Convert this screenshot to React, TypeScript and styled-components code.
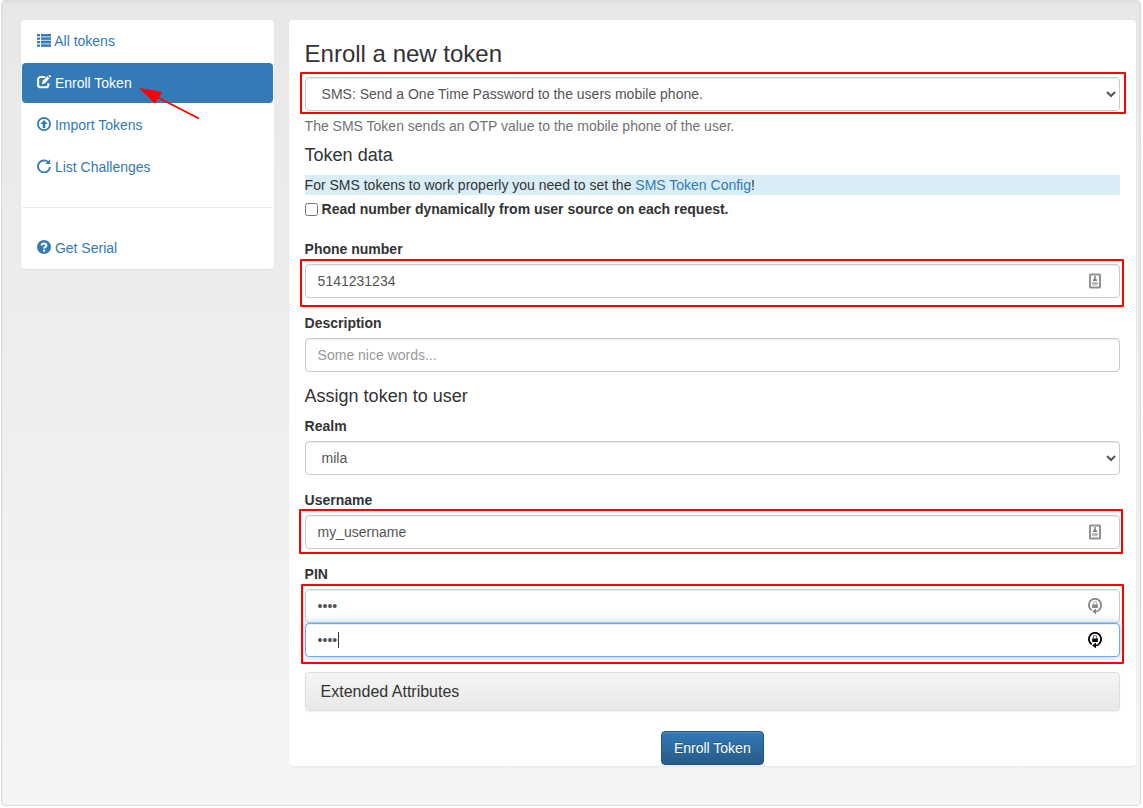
import React from 'react';
import styled, { createGlobalStyle, css } from 'styled-components';

const GlobalStyle = createGlobalStyle`
  *, *::before, *::after { box-sizing: border-box; }
  body {
    margin: 0;
    background: #fff;
    color: #333;
    font: 14px/20px "Liberation Sans", Arial, sans-serif;
    overflow: hidden;
  }
  input, select, button { font-family: inherit; }
`;

const Page = styled.div`
  position: relative;
  width: 1143px;
  height: 808px;
  padding: 0 2px 2px 1px;
`;

const Well = styled.div`
  display: flex;
  align-items: flex-start;
  gap: 14.6px;
  height: 806px;
  padding: 19px 4px 19px 19px;
  border: 1px solid #dcdcdc;
  border-radius: 4px;
  background: linear-gradient(to bottom, #e8e8e8 0%, #f5f5f5 100%);
  box-shadow: inset 0 1px 3px rgba(0, 0, 0, 0.05), 0 1px 0 rgba(255, 255, 255, 0.1);
`;

const panel = css`
  background: #fff;
  border: 1px solid transparent;
  border-radius: 4px;
  box-shadow: 0 1px 2px rgba(0, 0, 0, 0.05);
`;

const Sidebar = styled.nav`
  ${panel}
  flex: none;
  width: 253px;
  height: 249px;
  display: flex;
  flex-direction: column;
  gap: 2px;
`;

const NavItem = styled.a<{ $active?: boolean; $gap?: number }>`
  display: flex;
  align-items: center;
  gap: ${p => p.$gap ?? 3.9}px;
  height: 40px;
  padding: 0 15px;
  border-radius: 4px;
  color: ${p => (p.$active ? '#fff' : '#337ab7')};
  background: ${p => (p.$active ? '#337ab7' : 'transparent')};
`;

const Divider = styled.div`
  height: 1px;
  margin: 18px 0;
  background: #eee;
`;

const Icon = styled.svg`
  width: 14px;
  height: 14px;
  flex: none;
  margin-top: -2px;
`;

const Main = styled.main`
  ${panel}
  flex: none;
  width: 847.4px;
  height: 746px;
  padding: 20px 15px 0;
`;

const Title = styled.h3`
  margin: 0 0 10px;
  font-size: 24px;
  line-height: 26px;
  font-weight: 400;
`;

const Subtitle = styled.h4`
  margin: 0;
  padding: 9px 0 10px;
  font-size: 18px;
  line-height: 20px;
  font-weight: 400;
`;

const Help = styled.p`
  margin: 5px 0 0;
  color: #737373;
`;

const Info = styled.p`
  margin: 0 0 4px;
  background: #d9edf7;
`;

const Link = styled.a`
  color: #337ab7;
`;

const CheckLabel = styled.label`
  display: flex;
  align-items: center;
  gap: 4px;
  margin-bottom: 20px;
  font-weight: 700;
`;

const Checkbox = styled.input`
  width: 13px;
  height: 13px;
  margin: 0;
`;

const Group = styled.div<{ $after?: number }>`
  margin-bottom: ${p => p.$after ?? 15}px;
`;

const Label = styled.label`
  display: block;
  margin-bottom: 5px;
  font-weight: 700;
`;

const control = css`
  display: block;
  width: 100%;
  height: 34px;
  padding: 6px 12px;
  font-size: 14px;
  line-height: 20px;
  color: #555;
  background-color: #fff;
  border: 1px solid #ccc;
  border-radius: 4px;
  box-shadow: inset 0 1px 1px rgba(0, 0, 0, 0.075);
  outline: 0;
`;

const Select = styled.select`
  ${control}
`;

const FieldWrap = styled.div`
  position: relative;
`;

const Input = styled.input<{ $focused?: boolean }>`
  ${control}
  &::placeholder { color: #999; }
  ${p => p.$focused && css`
    border-color: #66afe9;
    box-shadow: inset 0 1px 1px rgba(0, 0, 0, 0.075), 0 0 8px rgba(102, 175, 233, 0.6);
  `}
`;

const FieldIcon = styled.svg`
  position: absolute;
  top: 8px;
  right: 16px;
  width: 18px;
  height: 18px;
`;

const Caret = styled.span`
  position: absolute;
  left: 33.4px;
  top: 9px;
  width: 1px;
  height: 16px;
  background: #333;
`;

const Accordion = styled.div`
  height: 39px;
  margin-bottom: 20px;
  padding: 0 15px;
  border: 1px solid #ddd;
  border-radius: 4px;
  background: linear-gradient(to bottom, #f5f5f5 0%, #e8e8e8 100%);
  box-shadow: 0 1px 2px rgba(0, 0, 0, 0.05);
  font-size: 16px;
  line-height: 37px;
`;

const Actions = styled.div`
  display: flex;
  justify-content: center;
`;

const Button = styled.button`
  width: 103px;
  height: 34px;
  padding: 0;
  border: 1px solid #245580;
  border-radius: 4px;
  background: linear-gradient(to bottom, #337ab7 0%, #265a88 100%);
  box-shadow: inset 0 1px 0 rgba(255, 255, 255, 0.15), 0 1px 1px rgba(0, 0, 0, 0.075);
  color: #fff;
  font-size: 14px;
  line-height: 20px;
  text-shadow: 0 -1px 0 rgba(0, 0, 0, 0.2);
`;

const Highlight = styled.div<{ $x: number; $y: number; $w: number; $h: number }>`
  position: absolute;
  left: ${p => p.$x}px;
  top: ${p => p.$y}px;
  width: ${p => p.$w}px;
  height: ${p => p.$h}px;
  border: 2px solid #f00;
  border-radius: 1px;
  pointer-events: none;
`;

const Arrow = styled.svg`
  position: absolute;
  left: 136px;
  top: 84px;
  width: 68px;
  height: 40px;
  pointer-events: none;
`;

const ListIcon = () => (
  <Icon viewBox="0 0 14 14" fill="currentColor">
    <path d="M0 1h3v2.2H0zM4 1h10v2.2H4zM0 4.5h3v2.2H0zM4 4.5h10v2.2H4zM0 8h3v2.2H0zM4 8h10v2.2H4zM0 11.5h3v2.3H0zM4 11.5h10v2.3H4z" />
    <path d="M4 1h10v12.8H4z" opacity=".35" />
  </Icon>
);

const EditIcon = () => (
  <Icon viewBox="0 0 14 14">
    <path d="M8.2 2H4Q1.1 2 1.1 4.8v4.6Q1.1 12.3 4 12.3h4.6Q11.4 12.3 11.4 9.4V8.2" fill="none" stroke="currentColor" strokeWidth="2.1" />
    <path d="M4.8 9.2l.9-3.5 4.8-4.5 2.1 2.1-4.5 4.9zM11.4.8l.8-.7q.3-.3.7 0l1 1q.3.4 0 .7l-.7.8z" fill="currentColor" />
  </Icon>
);

const UploadIcon = () => (
  <Icon viewBox="0 0 14 14">
    <circle cx="7" cy="7" r="6.1" fill="none" stroke="currentColor" strokeWidth="1.8" />
    <path d="M7 2.9L10.6 7H8.3v3.9H5.7V7H3.4z" fill="currentColor" />
  </Icon>
);

const RepeatIcon = () => (
  <Icon viewBox="0 0 14 14">
    <path d="M11.2 3.1A6 6 0 1 0 13 8" fill="none" stroke="currentColor" strokeWidth="1.9" />
    <path d="M13.2 .2V5H8.4z" fill="currentColor" />
  </Icon>
);

const QuestionIcon = () => (
  <Icon viewBox="0 0 14 14">
    <circle cx="7" cy="7" r="7" fill="currentColor" />
    <path d="M4.7 5.5Q4.8 3.6 7 3.6q2.3 0 2.3 1.8 0 1-1.2 1.7-1 .6-1 1.5" fill="none" stroke="#fff" strokeWidth="2.1" />
    <path d="M6 9.6h2.2v2.1H6z" fill="#fff" />
  </Icon>
);

const ContactIcon = () => (
  <FieldIcon viewBox="0 0 18 18">
    <rect x="4" y="2.5" width="10" height="13" rx=".6" fill="none" stroke="#929292" strokeWidth="2" />
    <path d="M8.2 4h1.6v2.5l1.2 1.2V9H7V7.7l1.2-1.2z" fill="#858585" />
    <path d="M6.3 10.2h5.4v3.1H6.3z" fill="#c4c4c4" />
    <path d="M6.3 10.6h5.4v1H6.3z" fill="#a6a6a6" />
  </FieldIcon>
);

const LockIcon = ({ color }: { color: string }) => (
  <FieldIcon viewBox="0 0 18 18">
    <path d="M5.7 13.4C.4 9.2 3.5 1.8 9 1.8s8.6 7.3 3.4 11.8" fill="none" stroke={color} strokeWidth="1.8" />
    <path d="M10 11.4v5.9L6.2 14.4z" fill={color} />
    <path d="M9 13.4h3.6v1.7H9zM6.2 7.5h5.6v3.4H6.2z" fill={color} />
    <path d="M7.3 8V6.2a1.7 1.7 0 0 1 3.4 0V8" fill="none" stroke={color} strokeWidth="1.1" strokeOpacity=".6" />
  </FieldIcon>
);

export default function App() {
  return (
    <>
      <GlobalStyle />
      <Page>
        <Well>
          <Sidebar>
            <NavItem $gap={3.2}><ListIcon />All tokens</NavItem>
            <NavItem $active><EditIcon />Enroll Token</NavItem>
            <NavItem><UploadIcon />Import Tokens</NavItem>
            <NavItem><RepeatIcon />List Challenges</NavItem>
            <Divider />
            <NavItem><QuestionIcon />Get Serial</NavItem>
          </Sidebar>
          <Main>
            <Title>Enroll a new token</Title>
            <Select defaultValue="sms">
              <option value="sms">SMS: Send a One Time Password to the users mobile phone.</option>
            </Select>
            <Help>The SMS Token sends an OTP value to the mobile phone of the user.</Help>
            <Subtitle>Token data</Subtitle>
            <Info>For SMS tokens to work properly you need to set the <Link>SMS Token Config</Link>!</Info>
            <CheckLabel><Checkbox type="checkbox" />Read number dynamically from user source on each request.</CheckLabel>
            <Group>
              <Label>Phone number</Label>
              <FieldWrap><Input defaultValue="5141231234" /><ContactIcon /></FieldWrap>
            </Group>
            <Group $after={5}>
              <Label>Description</Label>
              <Input placeholder="Some nice words..." />
            </Group>
            <Subtitle>Assign token to user</Subtitle>
            <Group>
              <Label>Realm</Label>
              <Select defaultValue="mila"><option value="mila">mila</option></Select>
            </Group>
            <Group>
              <Label>Username</Label>
              <FieldWrap><Input defaultValue="my_username" /><ContactIcon /></FieldWrap>
            </Group>
            <Group>
              <Label>PIN</Label>
              <FieldWrap><Input type="password" defaultValue="1234" /><LockIcon color="#858585" /></FieldWrap>
              <FieldWrap>
                <Input type="password" defaultValue="1234" $focused />
                <Caret />
                <LockIcon color="#000" />
              </FieldWrap>
            </Group>
            <Accordion>Extended Attributes</Accordion>
            <Actions><Button>Enroll Token</Button></Actions>
          </Main>
        </Well>
        <Highlight $x={300} $y={72} $w={826} $h={42} />
        <Highlight $x={300} $y={259} $w={824} $h={48} />
        <Highlight $x={299} $y={509} $w={824} $h={45} />
        <Highlight $x={301} $y={584} $w={823} $h={80} />
        <Arrow viewBox="0 0 68 40">
          <path d="M20 12.5L63 34.5" stroke="#f00" strokeWidth="1.9" />
          <path d="M3 4L26 7.7L19 19.7Z" fill="#f00" />
        </Arrow>
      </Page>
    </>
  );
}
